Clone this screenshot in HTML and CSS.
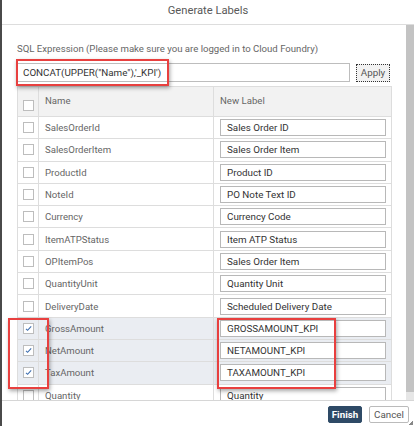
FILE: index.html
```html
<!DOCTYPE html>
<html>
<head>
<meta charset="utf-8">
<link rel="stylesheet" href="styles.css">
</head>
<body>
<div class="dialog">
  <div class="header">Generate Labels</div>
  <div class="main">
    <div class="content">
      <div class="sql-label">SQL Expression (Please make sure you are logged in to Cloud Foundry)</div>
      <div class="sql-row">
        <div class="sql-input">CONCAT(UPPER("Name"),'_KPI')</div>
        <div class="apply">Apply</div>
      </div>
      <div class="table">
        <div class="row head">
          <div class="c1"><span class="cb"></span></div>
          <div class="c2">Name</div>
          <div class="c3">New Label</div>
        </div>
        <div class="row"><div class="c1"><span class="cb"></span></div><div class="c2">SalesOrderId</div><div class="c3"><div class="inp">Sales Order ID</div></div></div>
        <div class="row"><div class="c1"><span class="cb"></span></div><div class="c2">SalesOrderItem</div><div class="c3"><div class="inp">Sales Order Item</div></div></div>
        <div class="row"><div class="c1"><span class="cb"></span></div><div class="c2">ProductId</div><div class="c3"><div class="inp">Product ID</div></div></div>
        <div class="row"><div class="c1"><span class="cb"></span></div><div class="c2">NoteId</div><div class="c3"><div class="inp">PO Note Text ID</div></div></div>
        <div class="row"><div class="c1"><span class="cb"></span></div><div class="c2">Currency</div><div class="c3"><div class="inp">Currency Code</div></div></div>
        <div class="row"><div class="c1"><span class="cb"></span></div><div class="c2">ItemATPStatus</div><div class="c3"><div class="inp">Item ATP Status</div></div></div>
        <div class="row"><div class="c1"><span class="cb"></span></div><div class="c2">OPItemPos</div><div class="c3"><div class="inp">Sales Order Item</div></div></div>
        <div class="row"><div class="c1"><span class="cb"></span></div><div class="c2">QuantityUnit</div><div class="c3"><div class="inp">Quantity Unit</div></div></div>
        <div class="row"><div class="c1"><span class="cb"></span></div><div class="c2">DeliveryDate</div><div class="c3"><div class="inp">Scheduled Delivery Date</div></div></div>
        <div class="row sel"><div class="c1"><span class="cb checked"><svg viewBox="0 0 11 11" width="11" height="11"><path d="M3 5.8 L4.6 7.3 L8.2 3.4" fill="none" stroke="#3f6fb0" stroke-width="1.1"/></svg></span></div><div class="c2">GrossAmount</div><div class="c3"><div class="inp">GROSSAMOUNT_KPI</div></div></div>
        <div class="row sel"><div class="c1"><span class="cb checked"><svg viewBox="0 0 11 11" width="11" height="11"><path d="M3 5.8 L4.6 7.3 L8.2 3.4" fill="none" stroke="#3f6fb0" stroke-width="1.1"/></svg></span></div><div class="c2">NetAmount</div><div class="c3"><div class="inp">NETAMOUNT_KPI</div></div></div>
        <div class="row sel"><div class="c1"><span class="cb checked"><svg viewBox="0 0 11 11" width="11" height="11"><path d="M3 5.8 L4.6 7.3 L8.2 3.4" fill="none" stroke="#3f6fb0" stroke-width="1.1"/></svg></span></div><div class="c2">TaxAmount</div><div class="c3"><div class="inp">TAXAMOUNT_KPI</div></div></div>
        <div class="row"><div class="c1"><span class="cb"></span></div><div class="c2">Quantity</div><div class="c3"><div class="inp">Quantity</div></div></div>
      </div>
    </div>
    <div class="scrollbar"><div class="thumb"></div></div>
  </div>
  <div class="footer">
    <div class="btn finish">Finish</div>
    <div class="btn cancel">Cancel</div>
    <div class="grip"></div>
  </div>
  <div class="hl hl-sql"></div>
  <div class="hl hl-cb"></div>
  <div class="hl hl-lbl"></div>
</div>
</body>
</html>
```
FILE: styles.css
```css
html, body {
  margin: 0;
  padding: 0;
  background: #fff;
}
body {
  font-family: "Roboto", "Lato", sans-serif;
  font-size: 9.6px;
  color: #555;
}
.dialog {
  position: relative;
  width: 414px;
  height: 426px;
  box-sizing: border-box;
  border-left: 2px solid #4a4a4a;
  display: flex;
  flex-direction: column;
  overflow: hidden;
}
.header {
  height: 24px;
  flex: 0 0 24px;
  border-bottom: 1px solid #ddd;
  text-align: center;
  line-height: 22px;
  font-size: 11.2px;
  color: #595959;
}
.main {
  flex: 1 1 auto;
  display: flex;
  overflow: hidden;
}
.content {
  flex: 1 1 auto;
  padding: 17px 0 0 15px;
  overflow: hidden;
}
.scrollbar {
  flex: 0 0 8px;
  display: flex;
  flex-direction: column;
  background: #e6e6e6;
}
.thumb {
  height: 367px;
  background: #c3c3c3;
}
.sql-label {
  font-size: 9.6px;
  color: #666;
  height: 14px;
  line-height: 14px;
}
.sql-row {
  display: flex;
  align-items: center;
  margin-top: 7px;
  height: 19px;
}
.sql-input {
  width: 326px;
  height: 17px;
  border: 1px solid #bdbdbd;
  box-sizing: content-box;
  padding-left: 6px;
  line-height: 17px;
  color: #333;
  font-size: 9.8px;
  margin-left: -1px;
}
.apply {
  margin-left: 6px;
  width: 32px;
  height: 16px;
  border: 1px dotted #333;
  background: #f2f2f2;
  text-align: center;
  line-height: 16px;
  color: #555;
  font-size: 9.8px;
}
.table {
  margin-top: 4px;
  width: 374px;
  border-left: 1px solid #ddd;
  border-top: 1px solid #ddd;
}
.row {
  display: grid;
  grid-template-columns: 21px 175px 178px;
  height: 22.3px;
  box-sizing: border-box;
  border-bottom: 1px solid #ddd;
}
.row > div {
  border-right: 1px solid #ddd;
  display: flex;
  align-items: center;
  box-sizing: border-box;
}
.row.head {
  height: 30px;
  background: #f2f2f2;
}
.row.head .c2, .row.head .c3 {
  align-items: flex-start;
  padding-top: 8px;
  color: #666;
}
.row.head .c1 {
  align-items: flex-start;
  padding-top: 13px;
}
.row.sel {
  background: #eaedf2;
}
.c1 {
  justify-content: center;
}
.c2 {
  padding-left: 6px;
  color: #666;
}
.c3 {
  padding: 0 5px 0 6px;
}
.cb {
  display: block;
  width: 11px;
  height: 11px;
  box-sizing: border-box;
  border: 1px solid #bdbdbd;
  background: #fff;
  position: relative;
}
.cb svg {
  position: absolute;
  left: -1px;
  top: -1px;
}
.inp {
  width: 100%;
  height: 17px;
  box-sizing: border-box;
  border: 1px solid #b8b8b8;
  background: #fff;
  padding-left: 6px;
  line-height: 15px;
  color: #333;
  font-size: 9.8px;
}
.footer {
  flex: 0 0 26px;
  height: 26px;
  box-sizing: border-box;
  border-top: 1px solid #d6d6d6;
  display: flex;
  align-items: flex-end;
  justify-content: flex-end;
  padding: 0 5px 3px 0;
  gap: 7px;
  position: relative;
}
.btn {
  height: 15px;
  line-height: 15px;
  font-size: 9.8px;
  text-align: center;
  border-radius: 2px;
}
.finish {
  width: 32px;
  background: #2e4a66;
  color: #fff;
  font-weight: bold;
  border: 1px solid #2e4a66;
}
.cancel {
  width: 38px;
  background: #fff;
  color: #555;
  border: 1px solid #bbb;
}
.grip {
  position: absolute;
  right: 1px;
  bottom: 1px;
  width: 4px;
  height: 4px;
  background: linear-gradient(135deg, transparent 50%, #888 50%);
}
.hl {
  position: absolute;
  border: 2.5px solid #e8403f;
  box-shadow: 1px 2px 4px rgba(0, 0, 0, 0.35);
  box-sizing: border-box;
}
.hl-sql {
  left: 14px;
  top: 59px;
  width: 153px;
  height: 27px;
}
.hl-cb {
  left: 6px;
  top: 318px;
  width: 41px;
  height: 71px;
}
.hl-lbl {
  left: 215px;
  top: 318px;
  width: 119px;
  height: 71px;
}
```
